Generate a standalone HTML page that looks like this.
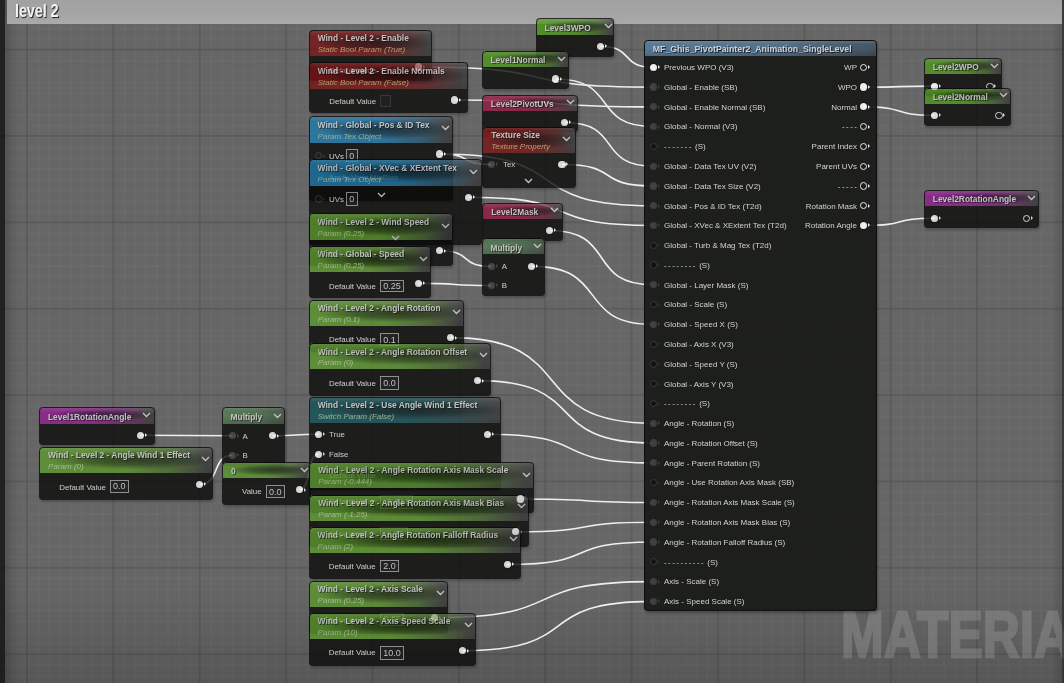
<!DOCTYPE html><html><head><meta charset="utf-8"><style>

*{margin:0;padding:0;box-sizing:border-box}
html,body{width:1064px;height:683px;overflow:hidden;background:#676767;font-family:"Liberation Sans",sans-serif}
#root{position:absolute;left:0;top:0;width:1064px;height:683px;will-change:transform}
#g{position:absolute;left:0;top:0;width:1064px;height:683px;
 background-color:#666666;
 background-image:
  linear-gradient(90deg, rgba(75,75,75,0.45) 0px, rgba(75,75,75,0.45) 1.8px, transparent 1.8px),
  linear-gradient(180deg, rgba(75,75,75,0.45) 0px, rgba(75,75,75,0.45) 1.8px, transparent 1.8px),
  linear-gradient(90deg, rgba(130,130,130,0.11) 0px, rgba(130,130,130,0.11) 1.6px, transparent 1.6px),
  linear-gradient(180deg, rgba(130,130,130,0.11) 0px, rgba(130,130,130,0.11) 1.6px, transparent 1.6px);
 background-size:86.36px 86.36px,86.36px 86.36px,10.7950px 10.7950px,10.7950px 10.7950px;
 background-position:26.10px 0,0 48.70px,37.59px 0,0 60.20px;
}
#vig{position:absolute;left:0;top:0;width:1064px;height:683px;background:linear-gradient(180deg, rgba(0,0,0,0) 0px, rgba(0,0,0,0) 580px, rgba(0,0,0,0.15) 683px),linear-gradient(90deg, rgba(0,0,0,0.22) 5px, rgba(0,0,0,0.08) 12px, rgba(0,0,0,0) 22px, rgba(0,0,0,0) 1050px, rgba(0,0,0,0.15) 1064px)}
#strip{position:absolute;left:0;top:0;width:5px;height:683px;background:rgba(26,26,26,0.88)}
#bar{position:absolute;left:7px;top:0;width:1055px;height:23.5px;background:linear-gradient(180deg,#a1a1a1 0%,#a6a6a6 70%,#aaaaaa 100%)}
#rstrip{position:absolute;left:1062px;top:0;width:2px;height:683px;background:rgba(40,40,40,0.55)}
#bar span{position:absolute;left:8px;top:-0.5px;font-size:18.5px;font-weight:bold;color:#f2f2f2;text-shadow:1px 1px 1px #222;transform:scaleX(0.79);transform-origin:0 0;letter-spacing:-0.2px}
#wm{position:absolute;left:841px;top:602px;font-size:65px;line-height:1;font-weight:bold;color:#adadad;-webkit-text-stroke:2.4px #adadad;opacity:0.3;transform:scaleX(0.79);transform-origin:0 0;letter-spacing:0px;white-space:nowrap}
svg.w{position:absolute;left:0;top:0}
svg.w path{fill:none;stroke:#efefef;stroke-width:1.6}
.node{position:absolute;border-radius:4px;background:#0b0c0a;box-shadow:1px 2px 3px rgba(0,0,0,0.3);overflow:hidden}
.node::after{content:'';position:absolute;left:0;top:0;right:0;bottom:0;border:1.1px solid #0a0a0a;border-radius:4px}
.hdr{position:absolute;left:0;top:0;right:0;border-radius:4px 4px 0 0}
.tt,.st,.bt,.mt{position:absolute;white-space:nowrap;line-height:0}
.tt{font-size:8.4px;font-weight:bold;color:#d8d8d8;text-shadow:1px 1px 0 rgba(0,0,0,0.6)}
.st{font-size:8px;font-style:italic}
.bt{font-size:7.9px;color:#e2e2e2;margin-top:1px}
.mt{font-size:8.0px;color:#d8d8d8;margin-top:0.8px}
.ds{letter-spacing:1.45px}
.rt{text-align:right}
.po,.ph,.pg,.pb{position:absolute;width:7.2px;height:7.2px;border-radius:50%}
.po{background:#f4f4f4;box-shadow:0 0 0 0.8px rgba(0,0,0,0.6)}
.ph{border:1.6px solid #f0f0f0}
.pg{background:#3c3d3c}
.pb{background:#0e0e0e;border:1px solid #3a3a3a}
.tri,.trig,.trib{position:absolute;width:0;height:0;border-top:2px solid transparent;border-bottom:2px solid transparent;border-left:2.6px solid #f0f0f0}
.trig{border-left-color:#3c3d3c}
.trib{border-left-color:#2a2a2a}
.chev{position:absolute}
.vb{position:absolute;border:1px solid #9a9a9a;background:#131313}
.vb span{position:absolute;left:2px;top:50%;line-height:0;font-size:9px;color:#d8d8d8}
.cb{position:absolute;border:1px solid #2c2c2c;background:#0f0f0f}

</style></head><body><div id="root">
<div id="g"></div><div id="vig"></div>
<div id="wm">MATERIAL</div>
<div id="bar"><span>level 2</span></div>
<svg class="w" width="1064" height="683"><path d="M600.4 46.4 C635.0 46.4 619.0 67.3 653.6 67.3"/><path d="M418.5 67.0 C571.3 67.0 500.8 87.1 653.6 87.1"/><path d="M454.9 100.0 C584.1 100.0 524.4 106.9 653.6 106.9"/><path d="M555.6 79.0 C619.3 79.0 589.9 126.6 653.6 126.6"/><path d="M564.8 122.5 C622.5 122.5 595.9 166.2 653.6 166.2"/><path d="M562.0 164.5 C621.5 164.5 594.1 186.0 653.6 186.0"/><path d="M439.9 154.0 C578.8 154.0 514.7 205.8 653.6 205.8"/><path d="M439.9 154.0 C473.6 154.0 458.0 164.5 491.7 164.5"/><path d="M468.4 197.2 C588.8 197.2 533.2 225.5 653.6 225.5"/><path d="M549.5 230.5 C617.2 230.5 585.9 284.9 653.6 284.9"/><path d="M531.8 266.4 C611.0 266.4 574.4 324.4 653.6 324.4"/><path d="M439.9 250.7 C473.6 250.7 458.0 266.4 491.7 266.4"/><path d="M418.4 283.4 C466.0 283.4 444.1 285.5 491.7 285.5"/><path d="M450.5 337.6 C582.5 337.6 521.6 423.3 653.6 423.3"/><path d="M477.4 380.6 C591.9 380.6 539.1 443.1 653.6 443.1"/><path d="M487.8 434.3 C595.6 434.3 545.8 462.9 653.6 462.9"/><path d="M520.1 499.0 C606.9 499.0 566.8 502.5 653.6 502.5"/><path d="M515.2 531.8 C605.2 531.8 563.6 522.2 653.6 522.2"/><path d="M507.2 564.5 C602.4 564.5 558.4 542.0 653.6 542.0"/><path d="M434.4 617.7 C576.9 617.7 511.1 581.6 653.6 581.6"/><path d="M462.5 650.7 C586.7 650.7 529.4 601.4 653.6 601.4"/><path d="M140.4 435.3 C200.3 435.3 172.6 435.7 232.5 435.7"/><path d="M199.5 484.4 C220.9 484.4 211.1 455.3 232.5 455.3"/><path d="M272.6 435.7 C302.6 435.7 288.7 434.3 318.7 434.3"/><path d="M299.3 489.6 C311.9 489.6 306.1 454.2 318.7 454.2"/><path d="M863.8 87.1 C909.8 87.1 888.6 86.1 934.6 86.1"/><path d="M863.8 106.9 C909.8 106.9 888.6 115.3 934.6 115.3"/><path d="M863.8 225.5 C909.8 225.5 888.6 218.3 934.6 218.3"/></svg>
<div class="node" style="left:535.6px;top:18.1px;width:78.7px;height:38.9px;opacity:0.8"><div class="hdr" style="height:17.3px;background:linear-gradient(180deg, rgba(255,255,255,0.28) 0px, rgba(255,255,255,0.10) 1.5px, rgba(255,255,255,0.04) 4px, rgba(255,255,255,0) 6px),radial-gradient(ellipse 48% 36% at 55% 50%, rgba(0,0,0,0.62) 0%, rgba(0,0,0,0.42) 50%, rgba(0,0,0,0) 100%),linear-gradient(90deg, rgba(78,152,28,1) 0%, rgba(78,152,28,0.95) 50%, rgba(78,152,28,0.5) 78%, rgba(78,152,28,0) 97%),linear-gradient(180deg, #454545 0%, #363636 100%)"></div><div class="tt" style="left:9px;top:10.2px;">Level3WPO</div><div class="po" style="left:61.2px;top:24.7px"></div><div class="tri" style="left:69.2px;top:26.3px"></div><svg class="chev" style="left:68.4px;top:5.4px" width="9" height="6" viewBox="0 0 9 6"><path d="M1 1 L4.5 4.5 L8 1" fill="none" stroke="#d8d8d8" stroke-width="1.4"/></svg></div>
<div class="node" style="left:481.5px;top:50.6px;width:87.5px;height:38.6px;opacity:0.8"><div class="hdr" style="height:16.6px;background:linear-gradient(180deg, rgba(255,255,255,0.28) 0px, rgba(255,255,255,0.10) 1.5px, rgba(255,255,255,0.04) 4px, rgba(255,255,255,0) 6px),radial-gradient(ellipse 48% 36% at 55% 50%, rgba(0,0,0,0.62) 0%, rgba(0,0,0,0.42) 50%, rgba(0,0,0,0) 100%),linear-gradient(90deg, rgba(78,152,28,1) 0%, rgba(78,152,28,0.95) 50%, rgba(78,152,28,0.5) 78%, rgba(78,152,28,0) 97%),linear-gradient(180deg, #454545 0%, #363636 100%)"></div><div class="tt" style="left:9px;top:9.8px;">Level1Normal</div><div class="po" style="left:70.5px;top:24.8px"></div><div class="tri" style="left:78.5px;top:26.4px"></div><svg class="chev" style="left:75.0px;top:5.9px" width="9" height="6" viewBox="0 0 9 6"><path d="M1 1 L4.5 4.5 L8 1" fill="none" stroke="#d8d8d8" stroke-width="1.4"/></svg></div>
<div class="node" style="left:481.8px;top:94.7px;width:96.5px;height:37.6px;opacity:0.8"><div class="hdr" style="height:16.5px;background:linear-gradient(180deg, rgba(255,255,255,0.28) 0px, rgba(255,255,255,0.10) 1.5px, rgba(255,255,255,0.04) 4px, rgba(255,255,255,0) 6px),radial-gradient(ellipse 48% 36% at 55% 50%, rgba(0,0,0,0.62) 0%, rgba(0,0,0,0.42) 50%, rgba(0,0,0,0) 100%),linear-gradient(90deg, rgba(150,24,68,1) 0%, rgba(150,24,68,0.95) 50%, rgba(150,24,68,0.5) 78%, rgba(150,24,68,0) 97%),linear-gradient(180deg, #454545 0%, #363636 100%)"></div><div class="tt" style="left:9px;top:9.7px;">Level2PivotUVs</div><div class="po" style="left:79.4px;top:24.2px"></div><div class="tri" style="left:87.4px;top:25.8px"></div><svg class="chev" style="left:84.0px;top:4.8px" width="9" height="6" viewBox="0 0 9 6"><path d="M1 1 L4.5 4.5 L8 1" fill="none" stroke="#d8d8d8" stroke-width="1.4"/></svg></div>
<div class="node" style="left:482.2px;top:127.2px;width:93.6px;height:60.8px;opacity:0.8"><div class="hdr" style="height:25.8px;background:linear-gradient(180deg, rgba(255,255,255,0.28) 0px, rgba(255,255,255,0.10) 1.5px, rgba(255,255,255,0.04) 4px, rgba(255,255,255,0) 6px),radial-gradient(ellipse 48% 36% at 55% 50%, rgba(0,0,0,0.62) 0%, rgba(0,0,0,0.42) 50%, rgba(0,0,0,0) 100%),linear-gradient(90deg, rgba(120,20,20,1) 0%, rgba(120,20,20,0.95) 50%, rgba(120,20,20,0.5) 78%, rgba(120,20,20,0) 97%),linear-gradient(180deg, #454545 0%, #363636 100%)"></div><div class="tt" style="left:9px;top:8.3px;">Texture Size</div><div class="st" style="left:9px;top:20.0px;color:#d2a874">Texture Property</div><div class="pg" style="left:5.9px;top:33.7px"></div><div class="trig" style="left:13.9px;top:35.3px"></div><div class="bt" style="left:20.8px;top:37.3px">Tex</div><div class="po" style="left:76.2px;top:33.7px"></div><div class="tri" style="left:84.2px;top:35.3px"></div><svg class="chev" style="left:41.7px;top:51.2px" width="9" height="6" viewBox="0 0 9 6"><path d="M1 1 L4.5 4.5 L8 1" fill="none" stroke="#d8d8d8" stroke-width="1.4"/></svg><svg class="chev" style="left:80.3px;top:9.3px" width="9" height="6" viewBox="0 0 9 6"><path d="M1 1 L4.5 4.5 L8 1" fill="none" stroke="#d8d8d8" stroke-width="1.4"/></svg></div>
<div class="node" style="left:482.2px;top:202.6px;width:81.2px;height:38.4px;opacity:0.8"><div class="hdr" style="height:16.1px;background:linear-gradient(180deg, rgba(255,255,255,0.28) 0px, rgba(255,255,255,0.10) 1.5px, rgba(255,255,255,0.04) 4px, rgba(255,255,255,0) 6px),radial-gradient(ellipse 48% 36% at 55% 50%, rgba(0,0,0,0.62) 0%, rgba(0,0,0,0.42) 50%, rgba(0,0,0,0) 100%),linear-gradient(90deg, rgba(150,24,68,1) 0%, rgba(150,24,68,0.95) 50%, rgba(150,24,68,0.5) 78%, rgba(150,24,68,0) 97%),linear-gradient(180deg, #454545 0%, #363636 100%)"></div><div class="tt" style="left:9px;top:9.5px;">Level2Mask</div><div class="po" style="left:63.7px;top:24.3px"></div><div class="tri" style="left:71.7px;top:25.9px"></div><svg class="chev" style="left:68.3px;top:4.9px" width="9" height="6" viewBox="0 0 9 6"><path d="M1 1 L4.5 4.5 L8 1" fill="none" stroke="#d8d8d8" stroke-width="1.4"/></svg></div>
<div class="node" style="left:481.5px;top:238.1px;width:63.3px;height:58.4px;opacity:0.8"><div class="hdr" style="height:16.1px;background:linear-gradient(180deg, rgba(255,255,255,0.16) 0px, rgba(255,255,255,0) 4px, rgba(0,0,0,0) 50%, rgba(0,0,0,0.15) 100%),linear-gradient(90deg, rgba(86,128,86,1) 0%, rgba(86,128,86,0.85) 55%, rgba(86,128,86,0.45) 100%),linear-gradient(180deg, #3a3a3a 0%, #2e2e2e 100%)"></div><div class="tt" style="left:9px;top:9.5px;">Multiply</div><div class="pg" style="left:6.6px;top:24.7px"></div><div class="trig" style="left:14.6px;top:26.3px"></div><div class="bt" style="left:20.3px;top:28.3px">A</div><div class="pg" style="left:6.6px;top:43.8px"></div><div class="trig" style="left:14.6px;top:45.4px"></div><div class="bt" style="left:20.3px;top:47.4px">B</div><div class="po" style="left:46.7px;top:24.7px"></div><div class="tri" style="left:54.7px;top:26.3px"></div><svg class="chev" style="left:51.0px;top:5.4px" width="9" height="6" viewBox="0 0 9 6"><path d="M1 1 L4.5 4.5 L8 1" fill="none" stroke="#d8d8d8" stroke-width="1.4"/></svg></div>
<div class="node" style="left:308.7px;top:29.8px;width:123.6px;height:51.2px;opacity:0.8"><div class="hdr" style="height:26.2px;background:linear-gradient(180deg, rgba(255,255,255,0.28) 0px, rgba(255,255,255,0.10) 1.5px, rgba(255,255,255,0.04) 4px, rgba(255,255,255,0) 6px),radial-gradient(ellipse 48% 36% at 55% 50%, rgba(0,0,0,0.62) 0%, rgba(0,0,0,0.42) 50%, rgba(0,0,0,0) 100%),linear-gradient(90deg, rgba(120,20,20,1) 0%, rgba(120,20,20,0.95) 50%, rgba(120,20,20,0.5) 78%, rgba(120,20,20,0) 97%),linear-gradient(180deg, #454545 0%, #363636 100%)"></div><div class="tt" style="left:9px;top:8.4px;">Wind - Level 2 - Enable</div><div class="st" style="left:9px;top:20.3px;color:#d2a874">Static Bool Param (True)</div><div class="bt" style="left:20.6px;top:40.2px">Default Value</div><div class="cb" style="left:71.8px;top:33.7px;width:10.9px;height:11.0px"><svg width="10" height="10" viewBox="0 0 10 10" style="position:absolute;left:0;top:0"><path d="M2 5.5 L4 7.5 L8.5 2" fill="none" stroke="#2a8aff" stroke-width="1.5"/></svg></div><div class="po" style="left:106.2px;top:33.6px"></div><div class="tri" style="left:114.2px;top:35.2px"></div></div>
<div class="node" style="left:308.7px;top:62.4px;width:159.8px;height:50.4px;opacity:0.8"><div class="hdr" style="height:26.5px;background:linear-gradient(180deg, rgba(255,255,255,0.28) 0px, rgba(255,255,255,0.10) 1.5px, rgba(255,255,255,0.04) 4px, rgba(255,255,255,0) 6px),radial-gradient(ellipse 48% 36% at 55% 50%, rgba(0,0,0,0.62) 0%, rgba(0,0,0,0.42) 50%, rgba(0,0,0,0) 100%),linear-gradient(90deg, rgba(120,20,20,1) 0%, rgba(120,20,20,0.95) 50%, rgba(120,20,20,0.5) 78%, rgba(120,20,20,0) 97%),linear-gradient(180deg, #454545 0%, #363636 100%)"></div><div class="tt" style="left:9px;top:8.5px;">Wind - Level 2 - Enable Normals</div><div class="st" style="left:9px;top:20.5px;color:#d2a874">Static Bool Param (False)</div><div class="bt" style="left:20.6px;top:38.6px">Default Value</div><div class="cb" style="left:71.8px;top:32.6px;width:10.9px;height:12.0px"></div><div class="po" style="left:142.6px;top:34.0px"></div><div class="tri" style="left:150.6px;top:35.6px"></div></div>
<div class="node" style="left:308.6px;top:116.1px;width:144.6px;height:84.9px;opacity:0.8"><div class="hdr" style="height:26.6px;background:linear-gradient(180deg, rgba(255,255,255,0.28) 0px, rgba(255,255,255,0.10) 1.5px, rgba(255,255,255,0.04) 4px, rgba(255,255,255,0) 6px),radial-gradient(ellipse 48% 36% at 55% 50%, rgba(0,0,0,0.62) 0%, rgba(0,0,0,0.42) 50%, rgba(0,0,0,0) 100%),linear-gradient(90deg, rgba(32,122,172,1) 0%, rgba(32,122,172,0.95) 50%, rgba(32,122,172,0.5) 78%, rgba(32,122,172,0) 97%),linear-gradient(180deg, #454545 0%, #363636 100%)"></div><div class="tt" style="left:9px;top:8.5px;">Wind - Global - Pos &amp; ID Tex</div><div class="st" style="left:9px;top:20.6px;color:#9cc0ac">Param Tex Object</div><div class="pb" style="left:6.3px;top:36.0px"></div><div class="trib" style="left:14.3px;top:37.6px"></div><div class="bt" style="left:20.4px;top:39.6px">UVs</div><div class="vb" style="left:37.6px;top:32.9px;width:11.5px;height:13.3px"><span>0</span></div><div class="po" style="left:127.7px;top:34.3px"></div><div class="tri" style="left:135.7px;top:35.9px"></div><div class="bt" style="left:20.4px;top:61.4px">Apply View MipBias</div><svg class="chev" style="left:132.5px;top:9.4px" width="9" height="6" viewBox="0 0 9 6"><path d="M1 1 L4.5 4.5 L8 1" fill="none" stroke="#d8d8d8" stroke-width="1.4"/></svg></div>
<div class="node" style="left:308.6px;top:159.1px;width:173.1px;height:85.9px;opacity:0.8"><div class="hdr" style="height:26.6px;background:linear-gradient(180deg, rgba(255,255,255,0.28) 0px, rgba(255,255,255,0.10) 1.5px, rgba(255,255,255,0.04) 4px, rgba(255,255,255,0) 6px),radial-gradient(ellipse 48% 36% at 55% 50%, rgba(0,0,0,0.62) 0%, rgba(0,0,0,0.42) 50%, rgba(0,0,0,0) 100%),linear-gradient(90deg, rgba(32,122,172,1) 0%, rgba(32,122,172,0.95) 50%, rgba(32,122,172,0.5) 78%, rgba(32,122,172,0) 97%),linear-gradient(180deg, #454545 0%, #363636 100%)"></div><div class="tt" style="left:9px;top:8.5px;">Wind - Global - XVec &amp; XExtent Tex</div><div class="st" style="left:9px;top:20.6px;color:#9cc0ac">Param Tex Object</div><div class="pb" style="left:6.3px;top:36.3px"></div><div class="trib" style="left:14.3px;top:37.9px"></div><div class="bt" style="left:20.4px;top:39.9px">UVs</div><div class="vb" style="left:37.6px;top:33.4px;width:11.5px;height:13.3px"><span>0</span></div><div class="po" style="left:156.2px;top:34.5px"></div><div class="tri" style="left:164.2px;top:36.1px"></div><svg class="chev" style="left:68.3px;top:32.6px" width="9" height="6" viewBox="0 0 9 6"><path d="M1 1 L4.5 4.5 L8 1" fill="none" stroke="#d8d8d8" stroke-width="1.4"/></svg><svg class="chev" style="left:160.9px;top:9.7px" width="9" height="6" viewBox="0 0 9 6"><path d="M1 1 L4.5 4.5 L8 1" fill="none" stroke="#d8d8d8" stroke-width="1.4"/></svg></div>
<div class="node" style="left:308.6px;top:213.0px;width:144.6px;height:52.9px;opacity:0.8"><div class="hdr" style="height:27.2px;background:linear-gradient(180deg, rgba(255,255,255,0.28) 0px, rgba(255,255,255,0.10) 1.5px, rgba(255,255,255,0.04) 4px, rgba(255,255,255,0) 6px),radial-gradient(ellipse 48% 36% at 55% 50%, rgba(0,0,0,0.62) 0%, rgba(0,0,0,0.42) 50%, rgba(0,0,0,0) 100%),linear-gradient(90deg, rgba(92,152,46,1) 0%, rgba(92,152,46,0.95) 50%, rgba(92,152,46,0.5) 78%, rgba(92,152,46,0) 97%),linear-gradient(180deg, #454545 0%, #363636 100%)"></div><div class="tt" style="left:9px;top:8.7px;">Wind - Level 2 - Wind Speed</div><div class="st" style="left:9px;top:21.1px;color:#b2d294">Param (0.25)</div><div class="bt" style="left:20.4px;top:41.0px">Default Value</div><div class="vb" style="left:71.7px;top:34.0px;width:23.4px;height:13.0px"><span>0.25</span></div><div class="po" style="left:127.7px;top:34.1px"></div><div class="tri" style="left:135.7px;top:35.7px"></div><svg class="chev" style="left:82.9px;top:22.3px" width="9" height="6" viewBox="0 0 9 6"><path d="M1 1 L4.5 4.5 L8 1" fill="none" stroke="#d8d8d8" stroke-width="1.4"/></svg><svg class="chev" style="left:132.5px;top:9.5px" width="9" height="6" viewBox="0 0 9 6"><path d="M1 1 L4.5 4.5 L8 1" fill="none" stroke="#d8d8d8" stroke-width="1.4"/></svg></div>
<div class="node" style="left:308.6px;top:245.9px;width:122.7px;height:52.3px;opacity:0.8"><div class="hdr" style="height:25.7px;background:linear-gradient(180deg, rgba(255,255,255,0.28) 0px, rgba(255,255,255,0.10) 1.5px, rgba(255,255,255,0.04) 4px, rgba(255,255,255,0) 6px),radial-gradient(ellipse 48% 36% at 55% 50%, rgba(0,0,0,0.62) 0%, rgba(0,0,0,0.42) 50%, rgba(0,0,0,0) 100%),linear-gradient(90deg, rgba(92,152,46,1) 0%, rgba(92,152,46,0.95) 50%, rgba(92,152,46,0.5) 78%, rgba(92,152,46,0) 97%),linear-gradient(180deg, #454545 0%, #363636 100%)"></div><div class="tt" style="left:9px;top:8.2px;">Wind - Global - Speed</div><div class="st" style="left:9px;top:19.9px;color:#b2d294">Param (0.25)</div><div class="bt" style="left:20.4px;top:40.1px">Default Value</div><div class="vb" style="left:71.7px;top:33.7px;width:23.4px;height:12.9px"><span>0.25</span></div><div class="po" style="left:106.2px;top:33.9px"></div><div class="tri" style="left:114.2px;top:35.5px"></div><svg class="chev" style="left:110.2px;top:9.8px" width="9" height="6" viewBox="0 0 9 6"><path d="M1 1 L4.5 4.5 L8 1" fill="none" stroke="#d8d8d8" stroke-width="1.4"/></svg></div>
<div class="node" style="left:308.7px;top:299.9px;width:155.7px;height:52.1px;opacity:0.8"><div class="hdr" style="height:26.3px;background:linear-gradient(180deg, rgba(255,255,255,0.28) 0px, rgba(255,255,255,0.10) 1.5px, rgba(255,255,255,0.04) 4px, rgba(255,255,255,0) 6px),radial-gradient(ellipse 48% 36% at 55% 50%, rgba(0,0,0,0.62) 0%, rgba(0,0,0,0.42) 50%, rgba(0,0,0,0) 100%),linear-gradient(90deg, rgba(92,152,46,1) 0%, rgba(92,152,46,0.95) 50%, rgba(92,152,46,0.5) 78%, rgba(92,152,46,0) 97%),linear-gradient(180deg, #454545 0%, #363636 100%)"></div><div class="tt" style="left:9px;top:8.4px;">Wind - Level 2 - Angle Rotation</div><div class="st" style="left:9px;top:20.4px;color:#b2d294">Param (0.1)</div><div class="bt" style="left:20.3px;top:39.6px">Default Value</div><div class="vb" style="left:71.5px;top:33.1px;width:18.6px;height:13.2px"><span>0.1</span></div><div class="po" style="left:138.2px;top:34.1px"></div><div class="tri" style="left:146.2px;top:35.7px"></div><svg class="chev" style="left:143.3px;top:9.4px" width="9" height="6" viewBox="0 0 9 6"><path d="M1 1 L4.5 4.5 L8 1" fill="none" stroke="#d8d8d8" stroke-width="1.4"/></svg></div>
<div class="node" style="left:308.7px;top:343.3px;width:182.6px;height:52.6px;opacity:0.8"><div class="hdr" style="height:25.9px;background:linear-gradient(180deg, rgba(255,255,255,0.28) 0px, rgba(255,255,255,0.10) 1.5px, rgba(255,255,255,0.04) 4px, rgba(255,255,255,0) 6px),radial-gradient(ellipse 48% 36% at 55% 50%, rgba(0,0,0,0.62) 0%, rgba(0,0,0,0.42) 50%, rgba(0,0,0,0) 100%),linear-gradient(90deg, rgba(92,152,46,1) 0%, rgba(92,152,46,0.95) 50%, rgba(92,152,46,0.5) 78%, rgba(92,152,46,0) 97%),linear-gradient(180deg, #454545 0%, #363636 100%)"></div><div class="tt" style="left:9px;top:8.3px;">Wind - Level 2 - Angle Rotation Offset</div><div class="st" style="left:9px;top:20.1px;color:#b2d294">Param (0)</div><div class="bt" style="left:20.3px;top:39.7px">Default Value</div><div class="vb" style="left:71.5px;top:33.1px;width:18.6px;height:13.5px"><span>0.0</span></div><div class="po" style="left:165.1px;top:33.7px"></div><div class="tri" style="left:173.1px;top:35.3px"></div><svg class="chev" style="left:170.2px;top:9.2px" width="9" height="6" viewBox="0 0 9 6"><path d="M1 1 L4.5 4.5 L8 1" fill="none" stroke="#d8d8d8" stroke-width="1.4"/></svg></div>
<div class="node" style="left:39.0px;top:407.3px;width:115.6px;height:38.1px;opacity:0.8"><div class="hdr" style="height:16.3px;background:linear-gradient(180deg, rgba(255,255,255,0.28) 0px, rgba(255,255,255,0.10) 1.5px, rgba(255,255,255,0.04) 4px, rgba(255,255,255,0) 6px),radial-gradient(ellipse 48% 36% at 55% 50%, rgba(0,0,0,0.62) 0%, rgba(0,0,0,0.42) 50%, rgba(0,0,0,0) 100%),linear-gradient(90deg, rgba(146,30,146,1) 0%, rgba(146,30,146,0.95) 50%, rgba(146,30,146,0.5) 78%, rgba(146,30,146,0) 97%),linear-gradient(180deg, #454545 0%, #363636 100%)"></div><div class="tt" style="left:9px;top:9.6px;">Level1RotationAngle</div><div class="po" style="left:97.8px;top:24.4px"></div><div class="tri" style="left:105.8px;top:26.0px"></div><svg class="chev" style="left:103.0px;top:5.2px" width="9" height="6" viewBox="0 0 9 6"><path d="M1 1 L4.5 4.5 L8 1" fill="none" stroke="#d8d8d8" stroke-width="1.4"/></svg></div>
<div class="node" style="left:39.0px;top:446.8px;width:174.2px;height:53.2px;opacity:0.8"><div class="hdr" style="height:25.9px;background:linear-gradient(180deg, rgba(255,255,255,0.28) 0px, rgba(255,255,255,0.10) 1.5px, rgba(255,255,255,0.04) 4px, rgba(255,255,255,0) 6px),radial-gradient(ellipse 48% 36% at 55% 50%, rgba(0,0,0,0.62) 0%, rgba(0,0,0,0.42) 50%, rgba(0,0,0,0) 100%),linear-gradient(90deg, rgba(92,152,46,1) 0%, rgba(92,152,46,0.95) 50%, rgba(92,152,46,0.5) 78%, rgba(92,152,46,0) 97%),linear-gradient(180deg, #454545 0%, #363636 100%)"></div><div class="tt" style="left:9px;top:8.3px;">Wind - Level 2 - Angle Wind 1 Effect</div><div class="st" style="left:9px;top:20.1px;color:#b2d294">Param (0)</div><div class="bt" style="left:20.2px;top:40.2px">Default Value</div><div class="vb" style="left:70.9px;top:33.2px;width:18.8px;height:13.0px"><span>0.0</span></div><div class="po" style="left:156.9px;top:34.0px"></div><div class="tri" style="left:164.9px;top:35.6px"></div><svg class="chev" style="left:161.5px;top:9.7px" width="9" height="6" viewBox="0 0 9 6"><path d="M1 1 L4.5 4.5 L8 1" fill="none" stroke="#d8d8d8" stroke-width="1.4"/></svg></div>
<div class="node" style="left:221.6px;top:407.4px;width:63.8px;height:58.6px;opacity:0.8"><div class="hdr" style="height:16.3px;background:linear-gradient(180deg, rgba(255,255,255,0.16) 0px, rgba(255,255,255,0) 4px, rgba(0,0,0,0) 50%, rgba(0,0,0,0.15) 100%),linear-gradient(90deg, rgba(86,128,86,1) 0%, rgba(86,128,86,0.85) 55%, rgba(86,128,86,0.45) 100%),linear-gradient(180deg, #3a3a3a 0%, #2e2e2e 100%)"></div><div class="tt" style="left:9px;top:9.6px;">Multiply</div><div class="pg" style="left:7.3px;top:24.7px"></div><div class="trig" style="left:15.3px;top:26.3px"></div><div class="bt" style="left:20.9px;top:28.3px">A</div><div class="pg" style="left:7.3px;top:44.3px"></div><div class="trig" style="left:15.3px;top:45.9px"></div><div class="bt" style="left:20.9px;top:47.9px">B</div><div class="po" style="left:47.4px;top:24.7px"></div><div class="tri" style="left:55.4px;top:26.3px"></div><svg class="chev" style="left:51.4px;top:5.6px" width="9" height="6" viewBox="0 0 9 6"><path d="M1 1 L4.5 4.5 L8 1" fill="none" stroke="#d8d8d8" stroke-width="1.4"/></svg></div>
<div class="node" style="left:222.1px;top:461.8px;width:89.1px;height:43.2px;opacity:0.8"><div class="hdr" style="height:16.0px;background:linear-gradient(180deg, rgba(255,255,255,0.28) 0px, rgba(255,255,255,0.10) 1.5px, rgba(255,255,255,0.04) 4px, rgba(255,255,255,0) 6px),radial-gradient(ellipse 48% 36% at 55% 50%, rgba(0,0,0,0.62) 0%, rgba(0,0,0,0.42) 50%, rgba(0,0,0,0) 100%),linear-gradient(90deg, rgba(92,152,46,1) 0%, rgba(92,152,46,0.95) 50%, rgba(92,152,46,0.5) 78%, rgba(92,152,46,0) 97%),linear-gradient(180deg, #454545 0%, #363636 100%)"></div><div class="tt" style="left:9px;top:9.4px;">0</div><div class="bt" style="left:19.9px;top:29.2px">Value</div><div class="vb" style="left:43.9px;top:23.4px;width:18.9px;height:13.2px"><span>0.0</span></div><div class="po" style="left:73.6px;top:24.2px"></div><div class="tri" style="left:81.6px;top:25.8px"></div><svg class="chev" style="left:77.6px;top:5.2px" width="9" height="6" viewBox="0 0 9 6"><path d="M1 1 L4.5 4.5 L8 1" fill="none" stroke="#d8d8d8" stroke-width="1.4"/></svg></div>
<div class="node" style="left:308.7px;top:397.1px;width:192.3px;height:92.9px;opacity:0.8"><div class="hdr" style="height:26.0px;background:linear-gradient(180deg, rgba(255,255,255,0.28) 0px, rgba(255,255,255,0.10) 1.5px, rgba(255,255,255,0.04) 4px, rgba(255,255,255,0) 6px),radial-gradient(ellipse 48% 36% at 55% 50%, rgba(0,0,0,0.62) 0%, rgba(0,0,0,0.42) 50%, rgba(0,0,0,0) 100%),linear-gradient(90deg, rgba(20,82,88,1) 0%, rgba(20,82,88,0.95) 50%, rgba(20,82,88,0.5) 78%, rgba(20,82,88,0) 97%),linear-gradient(180deg, #454545 0%, #363636 100%)"></div><div class="tt" style="left:9px;top:8.3px;">Wind - Level 2 - Use Angle Wind 1 Effect</div><div class="st" style="left:9px;top:20.2px;color:#a2c2a0">Switch Param (False)</div><div class="po" style="left:6.4px;top:33.6px"></div><div class="tri" style="left:14.4px;top:35.2px"></div><div class="bt" style="left:20.3px;top:37.2px">True</div><div class="po" style="left:6.4px;top:53.5px"></div><div class="tri" style="left:14.4px;top:55.1px"></div><div class="bt" style="left:20.3px;top:57.1px">False</div><div class="bt" style="left:20.7px;top:78.2px">Default Value</div><div class="cb" style="left:72.1px;top:74.9px;width:10.0px;height:8.8px"></div><div class="po" style="left:175.5px;top:33.6px"></div><div class="tri" style="left:183.5px;top:35.2px"></div></div>
<div class="node" style="left:309.2px;top:462.1px;width:224.6px;height:50.9px;opacity:0.8"><div class="hdr" style="height:25.7px;background:linear-gradient(180deg, rgba(255,255,255,0.28) 0px, rgba(255,255,255,0.10) 1.5px, rgba(255,255,255,0.04) 4px, rgba(255,255,255,0) 6px),radial-gradient(ellipse 48% 36% at 55% 50%, rgba(0,0,0,0.62) 0%, rgba(0,0,0,0.42) 50%, rgba(0,0,0,0) 100%),linear-gradient(90deg, rgba(92,152,46,1) 0%, rgba(92,152,46,0.95) 50%, rgba(92,152,46,0.5) 78%, rgba(92,152,46,0) 97%),linear-gradient(180deg, #454545 0%, #363636 100%)"></div><div class="tt" style="left:9px;top:8.2px;">Wind - Level 2 - Angle Rotation Axis Mask Scale</div><div class="st" style="left:9px;top:19.9px;color:#b2d294">Param (-0.444)</div><div class="bt" style="left:19.8px;top:39.4px">Default Value</div><div class="vb" style="left:71.1px;top:33.0px;width:32.4px;height:13.5px"><span>-0.444</span></div><div class="po" style="left:207.3px;top:33.3px"></div><div class="tri" style="left:215.3px;top:34.9px"></div><svg class="chev" style="left:212.7px;top:9.5px" width="9" height="6" viewBox="0 0 9 6"><path d="M1 1 L4.5 4.5 L8 1" fill="none" stroke="#d8d8d8" stroke-width="1.4"/></svg></div>
<div class="node" style="left:309.2px;top:494.5px;width:219.7px;height:52.2px;opacity:0.8"><div class="hdr" style="height:26.1px;background:linear-gradient(180deg, rgba(255,255,255,0.28) 0px, rgba(255,255,255,0.10) 1.5px, rgba(255,255,255,0.04) 4px, rgba(255,255,255,0) 6px),radial-gradient(ellipse 48% 36% at 55% 50%, rgba(0,0,0,0.62) 0%, rgba(0,0,0,0.42) 50%, rgba(0,0,0,0) 100%),linear-gradient(90deg, rgba(92,152,46,1) 0%, rgba(92,152,46,0.95) 50%, rgba(92,152,46,0.5) 78%, rgba(92,152,46,0) 97%),linear-gradient(180deg, #454545 0%, #363636 100%)"></div><div class="tt" style="left:9px;top:8.4px;">Wind - Level 2 - Angle Rotation Axis Mask Bias</div><div class="st" style="left:9px;top:20.2px;color:#b2d294">Param (-1.25)</div><div class="bt" style="left:19.8px;top:39.0px">Default Value</div><div class="vb" style="left:71.1px;top:32.7px;width:27.3px;height:13.0px"><span>-1.25</span></div><div class="po" style="left:202.4px;top:33.7px"></div><div class="tri" style="left:210.4px;top:35.3px"></div><svg class="chev" style="left:207.7px;top:8.9px" width="9" height="6" viewBox="0 0 9 6"><path d="M1 1 L4.5 4.5 L8 1" fill="none" stroke="#d8d8d8" stroke-width="1.4"/></svg></div>
<div class="node" style="left:308.6px;top:526.8px;width:212.6px;height:51.8px;opacity:0.8"><div class="hdr" style="height:26.2px;background:linear-gradient(180deg, rgba(255,255,255,0.28) 0px, rgba(255,255,255,0.10) 1.5px, rgba(255,255,255,0.04) 4px, rgba(255,255,255,0) 6px),radial-gradient(ellipse 48% 36% at 55% 50%, rgba(0,0,0,0.62) 0%, rgba(0,0,0,0.42) 50%, rgba(0,0,0,0) 100%),linear-gradient(90deg, rgba(92,152,46,1) 0%, rgba(92,152,46,0.95) 50%, rgba(92,152,46,0.5) 78%, rgba(92,152,46,0) 97%),linear-gradient(180deg, #454545 0%, #363636 100%)"></div><div class="tt" style="left:9px;top:8.4px;">Wind - Level 2 - Angle Rotation Falloff Radius</div><div class="st" style="left:9px;top:20.3px;color:#b2d294">Param (2)</div><div class="bt" style="left:20.2px;top:39.2px">Default Value</div><div class="vb" style="left:71.6px;top:33.5px;width:18.8px;height:12.2px"><span>2.0</span></div><div class="po" style="left:195.0px;top:34.1px"></div><div class="tri" style="left:203.0px;top:35.7px"></div><svg class="chev" style="left:200.2px;top:9.2px" width="9" height="6" viewBox="0 0 9 6"><path d="M1 1 L4.5 4.5 L8 1" fill="none" stroke="#d8d8d8" stroke-width="1.4"/></svg></div>
<div class="node" style="left:308.6px;top:581.1px;width:139.2px;height:52.5px;opacity:0.8"><div class="hdr" style="height:25.7px;background:linear-gradient(180deg, rgba(255,255,255,0.28) 0px, rgba(255,255,255,0.10) 1.5px, rgba(255,255,255,0.04) 4px, rgba(255,255,255,0) 6px),radial-gradient(ellipse 48% 36% at 55% 50%, rgba(0,0,0,0.62) 0%, rgba(0,0,0,0.42) 50%, rgba(0,0,0,0) 100%),linear-gradient(90deg, rgba(92,152,46,1) 0%, rgba(92,152,46,0.95) 50%, rgba(92,152,46,0.5) 78%, rgba(92,152,46,0) 97%),linear-gradient(180deg, #454545 0%, #363636 100%)"></div><div class="tt" style="left:9px;top:8.2px;">Wind - Level 2 - Axis Scale</div><div class="st" style="left:9px;top:19.9px;color:#b2d294">Param (0.25)</div><div class="bt" style="left:20.2px;top:38.9px">Default Value</div><div class="vb" style="left:71.6px;top:31.9px;width:23.7px;height:13.0px"><span>0.25</span></div><div class="po" style="left:122.2px;top:33.0px"></div><div class="tri" style="left:130.2px;top:34.6px"></div><svg class="chev" style="left:127.4px;top:9.2px" width="9" height="6" viewBox="0 0 9 6"><path d="M1 1 L4.5 4.5 L8 1" fill="none" stroke="#d8d8d8" stroke-width="1.4"/></svg></div>
<div class="node" style="left:308.6px;top:612.9px;width:167.4px;height:53.2px;opacity:0.8"><div class="hdr" style="height:26.1px;background:linear-gradient(180deg, rgba(255,255,255,0.28) 0px, rgba(255,255,255,0.10) 1.5px, rgba(255,255,255,0.04) 4px, rgba(255,255,255,0) 6px),radial-gradient(ellipse 48% 36% at 55% 50%, rgba(0,0,0,0.62) 0%, rgba(0,0,0,0.42) 50%, rgba(0,0,0,0) 100%),linear-gradient(90deg, rgba(92,152,46,1) 0%, rgba(92,152,46,0.95) 50%, rgba(92,152,46,0.5) 78%, rgba(92,152,46,0) 97%),linear-gradient(180deg, #454545 0%, #363636 100%)"></div><div class="tt" style="left:9px;top:8.4px;">Wind - Level 2 - Axis Speed Scale</div><div class="st" style="left:9px;top:20.2px;color:#b2d294">Param (10)</div><div class="bt" style="left:20.2px;top:39.6px">Default Value</div><div class="vb" style="left:71.6px;top:33.4px;width:23.7px;height:13.5px"><span>10.0</span></div><div class="po" style="left:150.3px;top:34.2px"></div><div class="tri" style="left:158.3px;top:35.8px"></div><svg class="chev" style="left:155.0px;top:9.1px" width="9" height="6" viewBox="0 0 9 6"><path d="M1 1 L4.5 4.5 L8 1" fill="none" stroke="#d8d8d8" stroke-width="1.4"/></svg></div>
<div class="node" style="left:923.8px;top:57.5px;width:78.4px;height:38.5px;opacity:0.8"><div class="hdr" style="height:16.3px;background:linear-gradient(180deg, rgba(255,255,255,0.28) 0px, rgba(255,255,255,0.10) 1.5px, rgba(255,255,255,0.04) 4px, rgba(255,255,255,0) 6px),radial-gradient(ellipse 48% 36% at 55% 50%, rgba(0,0,0,0.62) 0%, rgba(0,0,0,0.42) 50%, rgba(0,0,0,0) 100%),linear-gradient(90deg, rgba(78,152,28,1) 0%, rgba(78,152,28,0.95) 50%, rgba(78,152,28,0.5) 78%, rgba(78,152,28,0) 97%),linear-gradient(180deg, #454545 0%, #363636 100%)"></div><div class="tt" style="left:9px;top:9.6px;">Level2WPO</div><div class="po" style="left:7.2px;top:25.0px"></div><div class="tri" style="left:15.2px;top:26.6px"></div><div class="ph" style="left:62.6px;top:25.0px"></div><div class="tri" style="left:70.6px;top:26.6px"></div><svg class="chev" style="left:66.2px;top:5.5px" width="9" height="6" viewBox="0 0 9 6"><path d="M1 1 L4.5 4.5 L8 1" fill="none" stroke="#d8d8d8" stroke-width="1.4"/></svg></div>
<div class="node" style="left:923.8px;top:87.7px;width:87.6px;height:38.4px;opacity:0.8"><div class="hdr" style="height:16.3px;background:linear-gradient(180deg, rgba(255,255,255,0.28) 0px, rgba(255,255,255,0.10) 1.5px, rgba(255,255,255,0.04) 4px, rgba(255,255,255,0) 6px),radial-gradient(ellipse 48% 36% at 55% 50%, rgba(0,0,0,0.62) 0%, rgba(0,0,0,0.42) 50%, rgba(0,0,0,0) 100%),linear-gradient(90deg, rgba(78,152,28,1) 0%, rgba(78,152,28,0.95) 50%, rgba(78,152,28,0.5) 78%, rgba(78,152,28,0) 97%),linear-gradient(180deg, #454545 0%, #363636 100%)"></div><div class="tt" style="left:9px;top:9.6px;">Level2Normal</div><div class="po" style="left:7.2px;top:24.0px"></div><div class="tri" style="left:15.2px;top:25.6px"></div><div class="ph" style="left:71.6px;top:24.0px"></div><div class="tri" style="left:79.6px;top:25.6px"></div><svg class="chev" style="left:75.4px;top:4.6px" width="9" height="6" viewBox="0 0 9 6"><path d="M1 1 L4.5 4.5 L8 1" fill="none" stroke="#d8d8d8" stroke-width="1.4"/></svg></div>
<div class="node" style="left:923.8px;top:189.7px;width:115.3px;height:38.5px;opacity:0.8"><div class="hdr" style="height:16.3px;background:linear-gradient(180deg, rgba(255,255,255,0.28) 0px, rgba(255,255,255,0.10) 1.5px, rgba(255,255,255,0.04) 4px, rgba(255,255,255,0) 6px),radial-gradient(ellipse 48% 36% at 55% 50%, rgba(0,0,0,0.62) 0%, rgba(0,0,0,0.42) 50%, rgba(0,0,0,0) 100%),linear-gradient(90deg, rgba(146,30,146,1) 0%, rgba(146,30,146,0.95) 50%, rgba(146,30,146,0.5) 78%, rgba(146,30,146,0) 97%),linear-gradient(180deg, #454545 0%, #363636 100%)"></div><div class="tt" style="left:9px;top:9.6px;">Level2RotationAngle</div><div class="po" style="left:7.2px;top:25.0px"></div><div class="tri" style="left:15.2px;top:26.6px"></div><div class="ph" style="left:99.4px;top:25.0px"></div><div class="tri" style="left:107.4px;top:26.6px"></div><svg class="chev" style="left:103.1px;top:5.6px" width="9" height="6" viewBox="0 0 9 6"><path d="M1 1 L4.5 4.5 L8 1" fill="none" stroke="#d8d8d8" stroke-width="1.4"/></svg></div>
<div class="node" style="left:643.7px;top:40.4px;width:233.8px;height:570.9px;opacity:0.95;background:#1a1c19"><div class="hdr" style="height:15.2px;background:linear-gradient(180deg, rgba(255,255,255,0.16) 0px, rgba(255,255,255,0) 4px, rgba(0,0,0,0) 50%, rgba(0,0,0,0.15) 100%),linear-gradient(90deg, rgba(88,124,156,1) 0%, rgba(88,124,156,0.85) 55%, rgba(88,124,156,0.45) 100%),linear-gradient(180deg, #3a3a3a 0%, #2e2e2e 100%)"></div><div class="tt" style="left:9px;top:9.0px;font-size:8.75px;font-weight:bold;color:#d0d6dc;text-shadow:1px 1px 0 rgba(0,0,0,0.7);">MF_Ghis_PivotPainter2_Animation_SingleLevel</div><div class="po" style="left:6.3px;top:23.3px"></div><div class="tri" style="left:14.3px;top:24.9px"></div><div class="mt" style="left:20.3px;top:26.9px">Previous WPO (V3)</div><div class="pg" style="left:6.3px;top:43.1px"></div><div class="trig" style="left:14.3px;top:44.7px"></div><div class="mt" style="left:20.3px;top:46.7px">Global - Enable (SB)</div><div class="pg" style="left:6.3px;top:62.9px"></div><div class="trig" style="left:14.3px;top:64.5px"></div><div class="mt" style="left:20.3px;top:66.5px">Global - Enable Normal (SB)</div><div class="pg" style="left:6.3px;top:82.6px"></div><div class="trig" style="left:14.3px;top:84.2px"></div><div class="mt" style="left:20.3px;top:86.2px">Global - Normal (V3)</div><div class="pb" style="left:6.3px;top:102.4px"></div><div class="trib" style="left:14.3px;top:104.0px"></div><div class="mt" style="left:20.3px;top:106.0px"><span class="ds">-------</span> (S)</div><div class="pg" style="left:6.3px;top:122.2px"></div><div class="trig" style="left:14.3px;top:123.8px"></div><div class="mt" style="left:20.3px;top:125.8px">Global - Data Tex UV (V2)</div><div class="pg" style="left:6.3px;top:142.0px"></div><div class="trig" style="left:14.3px;top:143.6px"></div><div class="mt" style="left:20.3px;top:145.6px">Global - Data Tex Size (V2)</div><div class="pg" style="left:6.3px;top:161.8px"></div><div class="trig" style="left:14.3px;top:163.4px"></div><div class="mt" style="left:20.3px;top:165.4px">Global - Pos &amp; ID Tex (T2d)</div><div class="pg" style="left:6.3px;top:181.5px"></div><div class="trig" style="left:14.3px;top:183.1px"></div><div class="mt" style="left:20.3px;top:185.1px">Global - XVec &amp; XExtent Tex (T2d)</div><div class="pb" style="left:6.3px;top:201.3px"></div><div class="trib" style="left:14.3px;top:202.9px"></div><div class="mt" style="left:20.3px;top:204.9px">Global - Turb &amp; Mag Tex (T2d)</div><div class="pb" style="left:6.3px;top:221.1px"></div><div class="trib" style="left:14.3px;top:222.7px"></div><div class="mt" style="left:20.3px;top:224.7px"><span class="ds">--------</span> (S)</div><div class="pg" style="left:6.3px;top:240.9px"></div><div class="trig" style="left:14.3px;top:242.5px"></div><div class="mt" style="left:20.3px;top:244.5px">Global - Layer Mask (S)</div><div class="pb" style="left:6.3px;top:260.7px"></div><div class="trib" style="left:14.3px;top:262.3px"></div><div class="mt" style="left:20.3px;top:264.3px">Global - Scale (S)</div><div class="pg" style="left:6.3px;top:280.4px"></div><div class="trig" style="left:14.3px;top:282.0px"></div><div class="mt" style="left:20.3px;top:284.0px">Global - Speed X (S)</div><div class="pb" style="left:6.3px;top:300.2px"></div><div class="trib" style="left:14.3px;top:301.8px"></div><div class="mt" style="left:20.3px;top:303.8px">Global - Axis X (V3)</div><div class="pb" style="left:6.3px;top:320.0px"></div><div class="trib" style="left:14.3px;top:321.6px"></div><div class="mt" style="left:20.3px;top:323.6px">Global - Speed Y (S)</div><div class="pb" style="left:6.3px;top:339.8px"></div><div class="trib" style="left:14.3px;top:341.4px"></div><div class="mt" style="left:20.3px;top:343.4px">Global - Axis Y (V3)</div><div class="pb" style="left:6.3px;top:359.6px"></div><div class="trib" style="left:14.3px;top:361.2px"></div><div class="mt" style="left:20.3px;top:363.2px"><span class="ds">--------</span> (S)</div><div class="pg" style="left:6.3px;top:379.3px"></div><div class="trig" style="left:14.3px;top:380.9px"></div><div class="mt" style="left:20.3px;top:382.9px">Angle - Rotation (S)</div><div class="pg" style="left:6.3px;top:399.1px"></div><div class="trig" style="left:14.3px;top:400.7px"></div><div class="mt" style="left:20.3px;top:402.7px">Angle - Rotation Offset (S)</div><div class="pg" style="left:6.3px;top:418.9px"></div><div class="trig" style="left:14.3px;top:420.5px"></div><div class="mt" style="left:20.3px;top:422.5px">Angle - Parent Rotation (S)</div><div class="pb" style="left:6.3px;top:438.7px"></div><div class="trib" style="left:14.3px;top:440.3px"></div><div class="mt" style="left:20.3px;top:442.3px">Angle - Use Rotation Axis Mask (SB)</div><div class="pg" style="left:6.3px;top:458.5px"></div><div class="trig" style="left:14.3px;top:460.1px"></div><div class="mt" style="left:20.3px;top:462.1px">Angle - Rotation Axis Mask Scale (S)</div><div class="pg" style="left:6.3px;top:478.2px"></div><div class="trig" style="left:14.3px;top:479.8px"></div><div class="mt" style="left:20.3px;top:481.8px">Angle - Rotation Axis Mask Bias (S)</div><div class="pg" style="left:6.3px;top:498.0px"></div><div class="trig" style="left:14.3px;top:499.6px"></div><div class="mt" style="left:20.3px;top:501.6px">Angle - Rotation Falloff Radius (S)</div><div class="pb" style="left:6.3px;top:517.8px"></div><div class="trib" style="left:14.3px;top:519.4px"></div><div class="mt" style="left:20.3px;top:521.4px"><span class="ds">----------</span> (S)</div><div class="pg" style="left:6.3px;top:537.6px"></div><div class="trig" style="left:14.3px;top:539.2px"></div><div class="mt" style="left:20.3px;top:541.2px">Axis - Scale (S)</div><div class="pg" style="left:6.3px;top:557.4px"></div><div class="trig" style="left:14.3px;top:559.0px"></div><div class="mt" style="left:20.3px;top:561.0px">Axis - Speed Scale (S)</div><div class="ph" style="left:216.5px;top:23.3px"></div><div class="tri" style="left:224.5px;top:24.9px"></div><div class="mt rt" style="right:20.5px;top:26.9px">WP</div><div class="po" style="left:216.5px;top:43.1px"></div><div class="tri" style="left:224.5px;top:44.7px"></div><div class="mt rt" style="right:20.5px;top:46.7px">WPO</div><div class="po" style="left:216.5px;top:62.9px"></div><div class="tri" style="left:224.5px;top:64.5px"></div><div class="mt rt" style="right:20.5px;top:66.5px">Normal</div><div class="ph" style="left:216.5px;top:82.6px"></div><div class="tri" style="left:224.5px;top:84.2px"></div><div class="mt rt" style="right:19.1px;top:86.2px"><span class="ds">----</span></div><div class="ph" style="left:216.5px;top:102.4px"></div><div class="tri" style="left:224.5px;top:104.0px"></div><div class="mt rt" style="right:20.5px;top:106.0px">Parent Index</div><div class="ph" style="left:216.5px;top:122.2px"></div><div class="tri" style="left:224.5px;top:123.8px"></div><div class="mt rt" style="right:20.5px;top:125.8px">Parent UVs</div><div class="ph" style="left:216.5px;top:142.0px"></div><div class="tri" style="left:224.5px;top:143.6px"></div><div class="mt rt" style="right:19.1px;top:145.6px"><span class="ds">-----</span></div><div class="ph" style="left:216.5px;top:161.8px"></div><div class="tri" style="left:224.5px;top:163.4px"></div><div class="mt rt" style="right:20.5px;top:165.4px">Rotation Mask</div><div class="po" style="left:216.5px;top:181.5px"></div><div class="tri" style="left:224.5px;top:183.1px"></div><div class="mt rt" style="right:20.5px;top:185.1px">Rotation Angle</div></div>
<div class="bt" style="left:329.3px;top:69.5px;opacity:0.25">Default Value</div>
<div class="po" style="left:516.5px;top:495.4px;opacity:0.75;background:#f0f0f0;box-shadow:none"></div>
<div class="po" style="left:511.6px;top:528.2px;opacity:0.75;background:#f0f0f0;box-shadow:none"></div>
<div class="po" style="left:430.8px;top:614.1px;opacity:0.45;background:#c8e0b0;box-shadow:none"></div>
<div class="po" style="left:414.9px;top:63.4px;opacity:0.35;background:#f0b0b0;box-shadow:none"></div>
<div class="po" style="left:931.0px;top:82.5px;opacity:0.6;background:#f0f0f0;box-shadow:none"></div>
<div id="strip"></div><div id="rstrip"></div>
</div></body></html>
